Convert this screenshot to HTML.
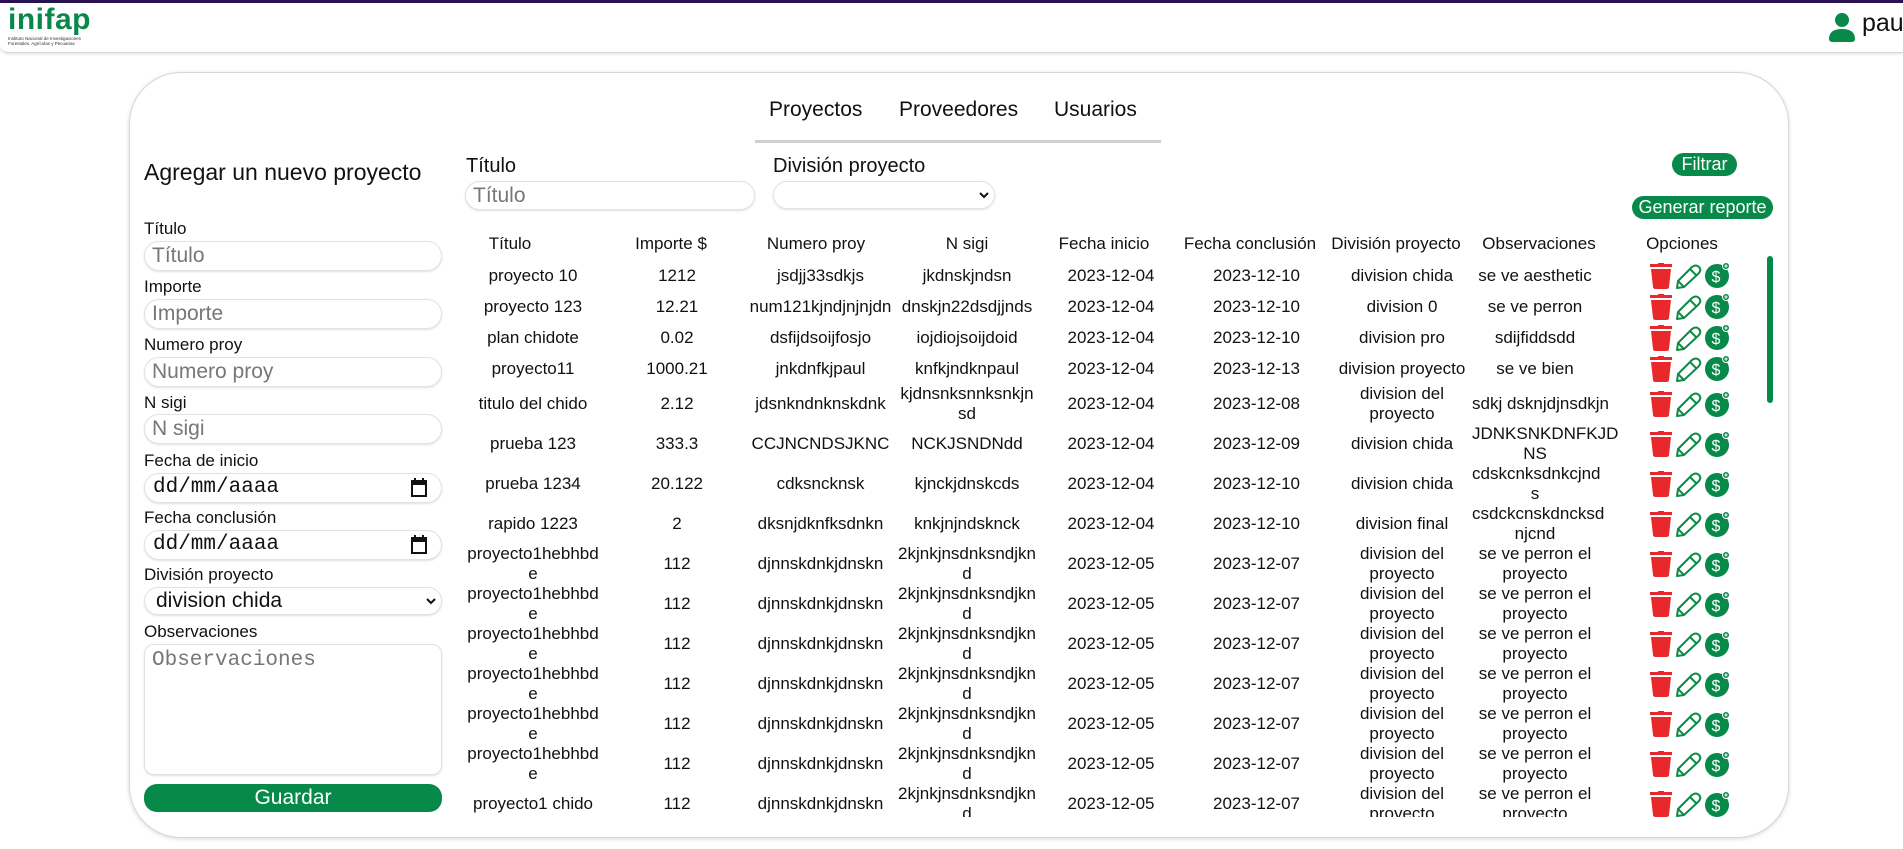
<!DOCTYPE html>
<html><head><meta charset="utf-8"><style>
*{box-sizing:border-box;margin:0;padding:0}
body{width:1903px;height:849px;overflow:hidden;background:#fff;font-family:"Liberation Sans",sans-serif;color:#111;position:relative}
.abs{position:absolute}
.topline{left:0;top:0;width:1903px;height:3px;background:#2a1150}
.header{left:0;top:3px;width:1903px;height:50px;background:#fff;border-bottom:1px solid #d8d8d8;box-shadow:0 1px 3px rgba(0,0,0,.12);border-bottom-left-radius:8px}
.card{left:129px;top:72px;width:1660px;height:766px;border:1px solid #d6d6d6;border-radius:52px;box-shadow:0 1px 4px rgba(0,0,0,.15)}
.lbl{font-size:17px;line-height:20px}
.inp{border:1px solid #e2e2e2;border-radius:15px;box-shadow:0 1px 2px rgba(0,0,0,.12);background:#fff;height:30px}
.ph{color:#777;font-size:21px;line-height:28px;padding-left:7px}
.mono{font-family:"Liberation Mono",monospace}
.btn{background:#07894a;color:#fff;text-align:center;border-radius:13px}
.th{font-size:17px;line-height:20px;text-align:center;transform:translateX(-50%);white-space:nowrap}
table{border-collapse:collapse;table-layout:fixed}
td{font-size:17px;line-height:20px;text-align:center;white-space:nowrap;padding:0;vertical-align:middle}
tr.s td{height:31px}
tr.d td{height:40px}
.ic{display:flex;align-items:center;justify-content:flex-start;gap:3px;padding-left:52px}
</style></head><body>
<div class="abs topline"></div>
<div class="abs header"></div>
<div class="abs" style="left:8px;top:4px;font-size:30px;font-weight:bold;color:#07894a;letter-spacing:0.5px;line-height:32px">inifap</div>
<div class="abs" style="left:8px;top:36px;font-size:4.5px;line-height:5px;color:#333">Instituto Nacional de Investigaciones<br>Forestales, Agrícolas y Pecuarias</div>
<svg class="abs" style="left:1829px;top:12px" width="26" height="30" viewBox="0 0 26 30"><circle cx="13" cy="8" r="7" fill="#07894a"/><path d="M0 27 Q0 17 13 17 Q26 17 26 27 Q26 30 22 30 L4 30 Q0 30 0 27Z" fill="#07894a"/></svg>
<div class="abs" style="left:1862px;top:9px;font-size:25px;line-height:28px;color:#111">pau</div>

<div class="abs card"></div>

<div class="abs" style="left:769px;top:97px;font-size:21px;line-height:26px">Proyectos</div>
<div class="abs" style="left:899px;top:97px;font-size:21px;line-height:26px">Proveedores</div>
<div class="abs" style="left:1054px;top:97px;font-size:21px;line-height:26px">Usuarios</div>
<div class="abs" style="left:755px;top:140px;width:406px;height:3px;background:#cfd0d4"></div>

<div class="abs" style="left:144px;top:159px;font-size:23px;line-height:27px">Agregar un nuevo proyecto</div>
<div class="abs lbl" style="left:144px;top:219px">Título</div>
<div class="abs inp" style="left:144px;top:241px;width:298px"><div class="ph">Título</div></div>
<div class="abs lbl" style="left:144px;top:277px">Importe</div>
<div class="abs inp" style="left:144px;top:299px;width:298px"><div class="ph">Importe</div></div>
<div class="abs lbl" style="left:144px;top:335px">Numero proy</div>
<div class="abs inp" style="left:144px;top:357px;width:298px"><div class="ph">Numero proy</div></div>
<div class="abs lbl" style="left:144px;top:393px">N sigi</div>
<div class="abs inp" style="left:144px;top:414px;width:298px"><div class="ph">N sigi</div></div>
<div class="abs lbl" style="left:144px;top:451px">Fecha de inicio</div>
<div class="abs inp" style="left:144px;top:473px;width:298px"><div class="ph mono" style="color:#111;padding-left:8px">dd/mm/aaaa</div>
<svg class="abs" style="left:266px;top:4px" width="16" height="19" viewBox="0 0 16 19"><rect x="1" y="3" width="14" height="15" fill="none" stroke="#111" stroke-width="2"/><rect x="1" y="3" width="14" height="4" fill="#111"/><rect x="3" y="0" width="2" height="4" fill="#111"/><rect x="11" y="0" width="2" height="4" fill="#111"/></svg></div>
<div class="abs lbl" style="left:144px;top:508px">Fecha conclusión</div>
<div class="abs inp" style="left:144px;top:530px;width:298px"><div class="ph mono" style="color:#111;padding-left:8px">dd/mm/aaaa</div>
<svg class="abs" style="left:266px;top:4px" width="16" height="19" viewBox="0 0 16 19"><rect x="1" y="3" width="14" height="15" fill="none" stroke="#111" stroke-width="2"/><rect x="1" y="3" width="14" height="4" fill="#111"/><rect x="3" y="0" width="2" height="4" fill="#111"/><rect x="11" y="0" width="2" height="4" fill="#111"/></svg></div>
<div class="abs lbl" style="left:144px;top:565px">División proyecto</div>
<div class="abs inp" style="left:144px;top:587px;width:298px;height:28px"><div class="ph" style="color:#111;padding-left:11px;line-height:26px">division chida</div>
<svg class="abs" style="left:281px;top:10px" width="10" height="7" viewBox="0 0 10 7"><path d="M1 1 L5 5 L9 1" fill="none" stroke="#111" stroke-width="2"/></svg></div>
<div class="abs lbl" style="left:144px;top:622px">Observaciones</div>
<div class="abs inp" style="left:144px;top:644px;width:298px;height:131px;border-radius:10px"><div class="ph mono" style="color:#777;padding-left:7px;padding-top:2px">Observaciones</div></div>
<div class="abs btn" style="left:144px;top:784px;width:298px;height:28px;font-size:21px;line-height:28px">Guardar</div>

<div class="abs" style="left:466px;top:154px;font-size:20px;line-height:24px">Título</div>
<div class="abs inp" style="left:465px;top:181px;width:290px;height:29px"><div class="ph" style="line-height:27px;padding-left:7px">Título</div></div>
<div class="abs" style="left:773px;top:154px;font-size:20px;line-height:24px">División proyecto</div>
<div class="abs inp" style="left:773px;top:181px;width:222px;height:28px"><svg class="abs" style="left:205px;top:10px" width="10" height="7" viewBox="0 0 10 7"><path d="M1 1 L5 5 L9 1" fill="none" stroke="#111" stroke-width="2"/></svg></div>
<div class="abs btn" style="left:1672px;top:153px;width:65px;height:23px;font-size:18px;line-height:23px">Filtrar</div>
<div class="abs btn" style="left:1632px;top:196px;width:141px;height:23px;font-size:18px;line-height:23px">Generar reporte</div>

<div class="abs th" style="left:510px;top:234px">Título</div>
<div class="abs th" style="left:671px;top:234px">Importe $</div>
<div class="abs th" style="left:816px;top:234px">Numero proy</div>
<div class="abs th" style="left:967px;top:234px">N sigi</div>
<div class="abs th" style="left:1104px;top:234px">Fecha inicio</div>
<div class="abs th" style="left:1250px;top:234px">Fecha conclusión</div>
<div class="abs th" style="left:1396px;top:234px">División proyecto</div>
<div class="abs th" style="left:1539px;top:234px">Observaciones</div>
<div class="abs th" style="left:1682px;top:234px">Opciones</div>

<svg width="0" height="0" style="position:absolute">
<defs>
<g id="tr"><rect x="0" y="1" width="22" height="3" fill="#e8282b"/><rect x="8" y="0" width="6" height="2" fill="#e8282b"/><path d="M1 6 L21 6 L19 24 Q19 26 16 26 L6 26 Q3 26 3 24 Z" fill="#e8282b"/></g>
<g id="pe"><path d="M2 25 L3 18 L17 4 Q21 1 24 4 Q27 7 23 11 L9 24 Z M3 18 L9 24 M15 6 L22 13" fill="none" stroke="#0d8a45" stroke-width="2" stroke-linejoin="round"/></g>
<g id="do"><circle cx="12" cy="14" r="12" fill="#07894a"/><text x="11" y="20" font-size="16" fill="#fff" text-anchor="middle" font-family="Liberation Sans">$</text><circle cx="21" cy="4" r="3.5" fill="#07894a" stroke="#fff" stroke-width="1"/><path d="M19.3 4 H22.7 M21 2.3 V5.7" stroke="#fff" stroke-width="1"/></g>
</defs></svg>

<div class="abs" style="left:460px;top:260px;width:1300px;height:557px;overflow:hidden">
<table style="width:1300px">
<colgroup><col style="width:146px"><col style="width:142px"><col style="width:145px"><col style="width:148px"><col style="width:140px"><col style="width:151px"><col style="width:140px"><col style="width:126px"><col style="width:162px"></colgroup>
<tbody>
<tr class="s"><td>proyecto 10</td><td>1212</td><td>jsdjj33sdkjs</td><td>jkdnskjndsn</td><td>2023-12-04</td><td>2023-12-10</td><td>division chida</td><td>se ve aesthetic</td><td><div class="ic"><svg width="22" height="26"><use href="#tr"/></svg><svg width="27" height="26"><use href="#pe"/></svg><svg width="26" height="27"><use href="#do"/></svg></div></td></tr>
<tr class="s"><td>proyecto 123</td><td>12.21</td><td>num121kjndjnjnjdn</td><td>dnskjn22dsdjjnds</td><td>2023-12-04</td><td>2023-12-10</td><td>division 0</td><td>se ve perron</td><td><div class="ic"><svg width="22" height="26"><use href="#tr"/></svg><svg width="27" height="26"><use href="#pe"/></svg><svg width="26" height="27"><use href="#do"/></svg></div></td></tr>
<tr class="s"><td>plan chidote</td><td>0.02</td><td>dsfijdsoijfosjo</td><td>iojdiojsoijdoid</td><td>2023-12-04</td><td>2023-12-10</td><td>division pro</td><td>sdijfiddsdd</td><td><div class="ic"><svg width="22" height="26"><use href="#tr"/></svg><svg width="27" height="26"><use href="#pe"/></svg><svg width="26" height="27"><use href="#do"/></svg></div></td></tr>
<tr class="s"><td>proyecto11</td><td>1000.21</td><td>jnkdnfkjpaul</td><td>knfkjndknpaul</td><td>2023-12-04</td><td>2023-12-13</td><td>division proyecto</td><td>se ve bien</td><td><div class="ic"><svg width="22" height="26"><use href="#tr"/></svg><svg width="27" height="26"><use href="#pe"/></svg><svg width="26" height="27"><use href="#do"/></svg></div></td></tr>
<tr class="d"><td>titulo del chido</td><td>2.12</td><td>jdsnkndnknskdnk</td><td>kjdnsnksnnksnkjn<br>sd</td><td>2023-12-04</td><td>2023-12-08</td><td>division del<br>proyecto</td><td>sdkj dsknjdjnsdkjn</td><td><div class="ic"><svg width="22" height="26"><use href="#tr"/></svg><svg width="27" height="26"><use href="#pe"/></svg><svg width="26" height="27"><use href="#do"/></svg></div></td></tr>
<tr class="d"><td>prueba 123</td><td>333.3</td><td>CCJNCNDSJKNC</td><td>NCKJSNDNdd</td><td>2023-12-04</td><td>2023-12-09</td><td>division chida</td><td>JDNKSNKDNFKJD<br>NS</td><td><div class="ic"><svg width="22" height="26"><use href="#tr"/></svg><svg width="27" height="26"><use href="#pe"/></svg><svg width="26" height="27"><use href="#do"/></svg></div></td></tr>
<tr class="d"><td>prueba 1234</td><td>20.122</td><td>cdksncknsk</td><td>kjnckjdnskcds</td><td>2023-12-04</td><td>2023-12-10</td><td>division chida</td><td>cdskcnksdnkcjnd<br>s</td><td><div class="ic"><svg width="22" height="26"><use href="#tr"/></svg><svg width="27" height="26"><use href="#pe"/></svg><svg width="26" height="27"><use href="#do"/></svg></div></td></tr>
<tr class="d"><td>rapido 1223</td><td>2</td><td>dksnjdknfksdnkn</td><td>knkjnjndsknck</td><td>2023-12-04</td><td>2023-12-10</td><td>division final</td><td>csdckcnskdncksd<br>njcnd</td><td><div class="ic"><svg width="22" height="26"><use href="#tr"/></svg><svg width="27" height="26"><use href="#pe"/></svg><svg width="26" height="27"><use href="#do"/></svg></div></td></tr>
<tr class="d"><td>proyecto1hebhbd<br>e</td><td>112</td><td>djnnskdnkjdnskn</td><td>2kjnkjnsdnksndjkn<br>d</td><td>2023-12-05</td><td>2023-12-07</td><td>division del<br>proyecto</td><td>se ve perron el<br>proyecto</td><td><div class="ic"><svg width="22" height="26"><use href="#tr"/></svg><svg width="27" height="26"><use href="#pe"/></svg><svg width="26" height="27"><use href="#do"/></svg></div></td></tr>
<tr class="d"><td>proyecto1hebhbd<br>e</td><td>112</td><td>djnnskdnkjdnskn</td><td>2kjnkjnsdnksndjkn<br>d</td><td>2023-12-05</td><td>2023-12-07</td><td>division del<br>proyecto</td><td>se ve perron el<br>proyecto</td><td><div class="ic"><svg width="22" height="26"><use href="#tr"/></svg><svg width="27" height="26"><use href="#pe"/></svg><svg width="26" height="27"><use href="#do"/></svg></div></td></tr>
<tr class="d"><td>proyecto1hebhbd<br>e</td><td>112</td><td>djnnskdnkjdnskn</td><td>2kjnkjnsdnksndjkn<br>d</td><td>2023-12-05</td><td>2023-12-07</td><td>division del<br>proyecto</td><td>se ve perron el<br>proyecto</td><td><div class="ic"><svg width="22" height="26"><use href="#tr"/></svg><svg width="27" height="26"><use href="#pe"/></svg><svg width="26" height="27"><use href="#do"/></svg></div></td></tr>
<tr class="d"><td>proyecto1hebhbd<br>e</td><td>112</td><td>djnnskdnkjdnskn</td><td>2kjnkjnsdnksndjkn<br>d</td><td>2023-12-05</td><td>2023-12-07</td><td>division del<br>proyecto</td><td>se ve perron el<br>proyecto</td><td><div class="ic"><svg width="22" height="26"><use href="#tr"/></svg><svg width="27" height="26"><use href="#pe"/></svg><svg width="26" height="27"><use href="#do"/></svg></div></td></tr>
<tr class="d"><td>proyecto1hebhbd<br>e</td><td>112</td><td>djnnskdnkjdnskn</td><td>2kjnkjnsdnksndjkn<br>d</td><td>2023-12-05</td><td>2023-12-07</td><td>division del<br>proyecto</td><td>se ve perron el<br>proyecto</td><td><div class="ic"><svg width="22" height="26"><use href="#tr"/></svg><svg width="27" height="26"><use href="#pe"/></svg><svg width="26" height="27"><use href="#do"/></svg></div></td></tr>
<tr class="d"><td>proyecto1hebhbd<br>e</td><td>112</td><td>djnnskdnkjdnskn</td><td>2kjnkjnsdnksndjkn<br>d</td><td>2023-12-05</td><td>2023-12-07</td><td>division del<br>proyecto</td><td>se ve perron el<br>proyecto</td><td><div class="ic"><svg width="22" height="26"><use href="#tr"/></svg><svg width="27" height="26"><use href="#pe"/></svg><svg width="26" height="27"><use href="#do"/></svg></div></td></tr>
<tr class="d"><td>proyecto1 chido</td><td>112</td><td>djnnskdnkjdnskn</td><td>2kjnkjnsdnksndjkn<br>d</td><td>2023-12-05</td><td>2023-12-07</td><td>division del<br>proyecto</td><td>se ve perron el<br>proyecto</td><td><div class="ic"><svg width="22" height="26"><use href="#tr"/></svg><svg width="27" height="26"><use href="#pe"/></svg><svg width="26" height="27"><use href="#do"/></svg></div></td></tr>
</tbody></table>
</div>
<div class="abs" style="left:1767px;top:256px;width:6px;height:147px;background:#07894a;border-radius:3px"></div>
</body></html>
